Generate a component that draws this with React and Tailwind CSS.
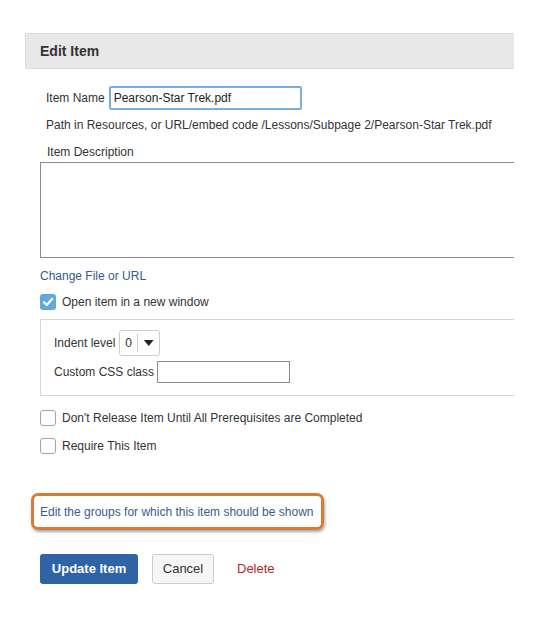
import React from 'react';

const Check = ({ checked }) =>
  checked ? (
    <span className="w-[16px] h-[16px] rounded-[3px] bg-[#62a8dd] flex items-center justify-center shrink-0">
      <svg width="12" height="12" viewBox="0 0 12 12">
        <path d="M2 6.2 L4.8 9 L10.2 2.8" fill="none" stroke="#fff" strokeWidth="2.2" strokeLinecap="round" strokeLinejoin="round" />
      </svg>
    </span>
  ) : (
    <span className="w-[16px] h-[16px] rounded-[3px] border border-[#a5a5a5] bg-white shrink-0" />
  );

const App = () => {
  return (
    <div className="w-[554px] h-[623px] bg-white pt-[33px] text-[12px] text-[#333] font-['Liberation_Sans',Arial,sans-serif]">
      <div className="ml-[25px] w-[489px] overflow-hidden">
        <div className="h-[36px] bg-[#e8e8e8] border border-[#dcdcdc] border-r-0 rounded-l-[2px] flex items-center pl-[14px]">
          <h2 className="text-[14px] font-bold text-[#333]">Edit Item</h2>
        </div>

        <div className="pl-[15px]">
          <div className="flex items-center mt-[17px] pl-[6px] h-[24px]">
            <span>Item Name</span>
            <input
              readOnly
              value="Pearson-Star Trek.pdf"
              className="ml-[4px] w-[193px] h-[24px] border-2 border-[#7aaee0] rounded-[2px] px-[3px] text-[12px] text-[#222] outline-none"
            />
          </div>
          <p className="mt-[6px] pl-[6px] leading-[18px]">
            Path in Resources, or URL/embed code /Lessons/Subpage 2/Pearson-Star Trek.pdf
          </p>
          <p className="mt-[9px] pl-[7px] leading-[18px]">Item Description</p>
          <div className="mt-[1px] w-[520px] h-[96px] border border-[#8a8a8a] bg-white" />

          <a className="block mt-[9px] leading-[18px] text-[#365a8e]">Change File or URL</a>

          <div className="flex items-center mt-[9px] h-[16px]">
            <Check checked />
            <span className="ml-[6px]">Open item in a new window</span>
          </div>

          <div className="mt-[9px] w-[520px] h-[77px] border border-[#d5d5d5] pl-[13px] pt-[10px]">
            <div className="flex items-center h-[26px]">
              <span>Indent level</span>
              <div className="ml-[4px] w-[41px] h-[26px] border border-[#ccc] rounded-[3px] flex items-center">
                <span className="w-[17px] text-center">0</span>
                <span className="w-px h-[18px] bg-[#ccc]" />
                <svg width="22" height="10" viewBox="0 0 22 10">
                  <path d="M6 2 H16 L11 8 Z" fill="#222" />
                </svg>
              </div>
            </div>
            <div className="flex items-center mt-[4px] h-[23px]">
              <span>Custom CSS class</span>
              <span className="ml-[3px] w-[133px] h-[22px] border border-[#8a8a8a] bg-white" />
            </div>
          </div>

          <div className="flex items-center mt-[14px] h-[16px]">
            <Check />
            <span className="ml-[6px]">Don't Release Item Until All Prerequisites are Completed</span>
          </div>
          <div className="flex items-center mt-[12px] h-[16px]">
            <Check />
            <span className="ml-[6px]">Require This Item</span>
          </div>
        </div>
      </div>

      <div className="ml-[31px] mt-[39px] w-[293px] h-[37px] border-[3px] border-[#d67b38] rounded-[7px] shadow-[1px_2px_3px_rgba(0,0,0,0.35)] flex items-center pl-[6px]">
        <a className="text-[#3d5a8a]">Edit the groups for which this item should be shown</a>
      </div>

      <div className="flex items-center ml-[40px] mt-[24px] h-[30px]">
        <button className="w-[98px] h-[30px] bg-[#2e63a6] text-white font-bold text-[13px] rounded-[3px]">
          Update Item
        </button>
        <button className="ml-[14px] w-[62px] h-[30px] bg-[#f6f6f6] border border-[#ccc] text-[13px] text-[#333] rounded-[3px]">
          Cancel
        </button>
        <a className="ml-[23px] text-[13px] text-[#b12a2a]">Delete</a>
      </div>
    </div>
  );
};

export default App;
